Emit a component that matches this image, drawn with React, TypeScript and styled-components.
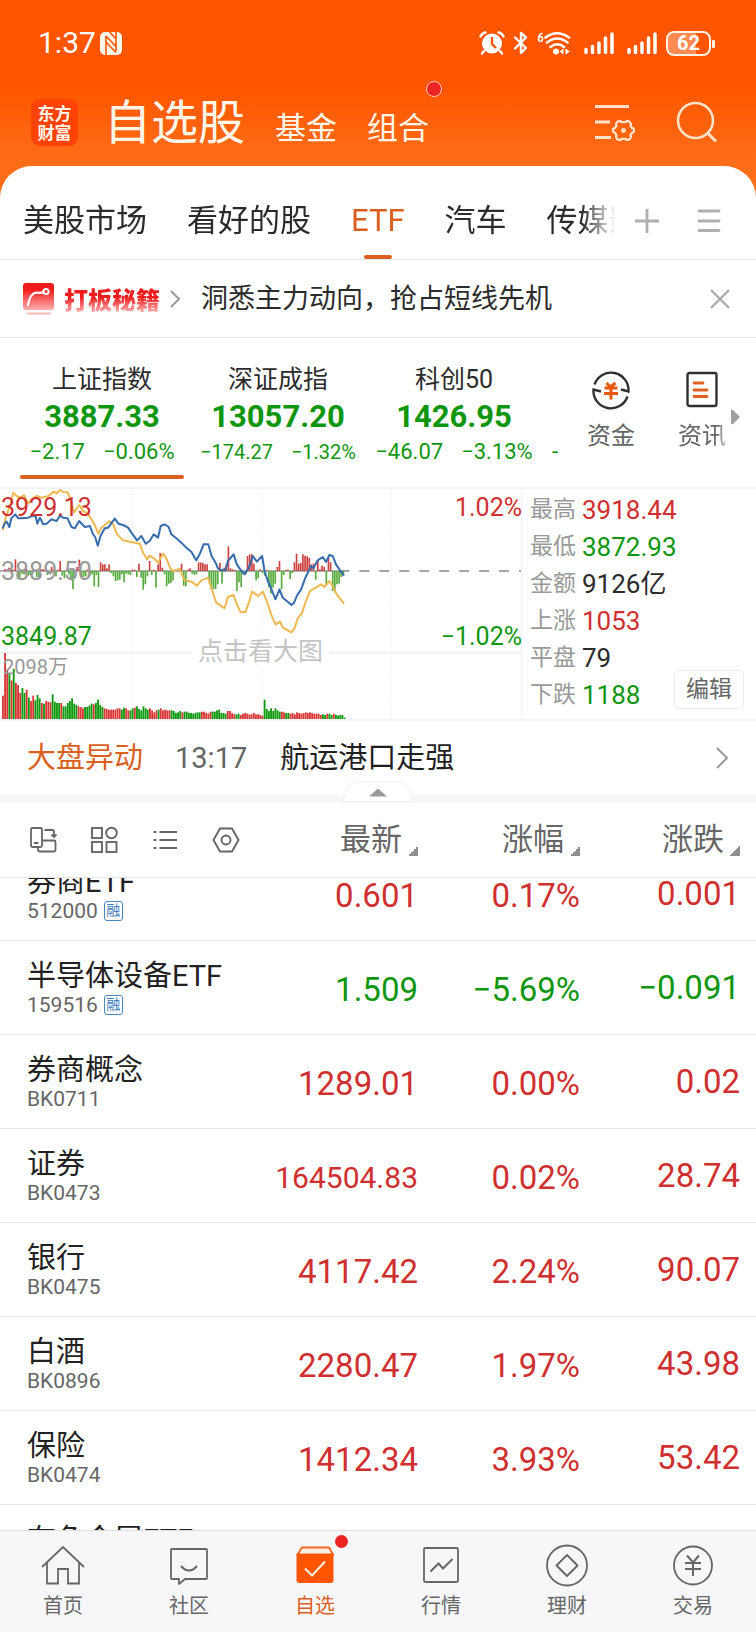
import React, { useLayoutEffect, useRef } from "react";
import styled, { createGlobalStyle, css } from "styled-components";

const RED = "#cf2f2f";
const GREEN = "#0f960f";
const ORANGE = "#ff5500";
const ACCENT = "#dc5f22";
const INK = "#2b2b2b";
const GREY = "#666666";
const LINE = "#e6e6e6";

type Tone = "up" | "down" | "plain";
const toneColor = (t: Tone) => (t === "up" ? RED : t === "down" ? GREEN : INK);

const GlobalStyle = createGlobalStyle`
  *, *::before, *::after { box-sizing: border-box; }
  body {
    margin: 0;
    font-family: Roboto, "Noto Sans CJK SC", sans-serif;
    color: ${INK};
    background: #fff;
  }
  button {
    margin: 0;
    padding: 0;
    border: 0;
    background: none;
    font: inherit;
    color: inherit;
    cursor: pointer;
  }
  svg { display: block; flex: none; }
  dl, dt, dd, p, h1, h2 { margin: 0; font-weight: 400; }
`;

const Screen = styled.div`
  display: flex;
  flex-direction: column;
  height: 100vh;
  background: linear-gradient(${ORANGE} 86px, #ff6d18 160px);
`;

/* ---------- status bar ---------- */

const StatusBar = styled.div`
  display: flex;
  align-items: center;
  justify-content: space-between;
  height: 86px;
  padding: 0 40px 0 38px;
  color: #fff;
`;

const StatusGroup = styled.div<{ $gap: number }>`
  display: flex;
  align-items: center;
  gap: ${(p) => p.$gap}px;
`;

const Clock = styled.span`
  font-size: 30px;
  line-height: 36px;
`;

const Battery = styled.div`
  position: relative;
  width: 45px;
  height: 25px;
  margin: 0 5px 0 -4px;
  border: 2px solid #fff2e6;
  border-radius: 8px;
  background: linear-gradient(90deg, #ff8a52 68%, transparent 68%);
  font-size: 20px;
  font-weight: 700;
  line-height: 21px;
  text-align: center;
  &::after {
    content: "";
    position: absolute;
    top: 7px;
    right: -6px;
    width: 3px;
    height: 8px;
    border-radius: 1px;
    background: #fff2e6;
  }
`;

/* ---------- app header ---------- */

const Header = styled.header`
  display: flex;
  align-items: center;
  height: 80px;
  padding: 0 38px 8px 31px;
  color: #fff6ea;
`;

const Logo = styled.div`
  display: flex;
  align-items: center;
  justify-content: center;
  width: 47px;
  height: 47px;
  margin-right: 26px;
  border-radius: 9px;
  background: #ff4306;
  font-family: "Noto Sans CJK SC", sans-serif;
  font-size: 17px;
  font-weight: 700;
  line-height: 19px;
  text-align: center;
`;

const Sections = styled.nav`
  display: flex;
  align-items: baseline;
  flex: 1;
  gap: 30px;
  padding-top: 8px;
`;

const SectionButton = styled.button<{ $active?: boolean }>`
  position: relative;
  font-size: ${(p) => (p.$active ? 47 : 31)}px;
  line-height: 60px;
`;

const Dot = styled.i<{ $ring?: boolean }>`
  position: absolute;
  top: ${(p) => (p.$ring ? -18 : 4)}px;
  right: ${(p) => (p.$ring ? -13 : 30)}px;
  width: ${(p) => (p.$ring ? 16 : 13)}px;
  height: ${(p) => (p.$ring ? 16 : 13)}px;
  border: ${(p) => (p.$ring ? "1px solid #ffc9b8" : "0")};
  border-radius: 50%;
  background: #ee2424;
`;

const HeaderActions = styled.div`
  display: flex;
  align-items: center;
  gap: 41px;
`;

/* ---------- white sheet ---------- */

const Sheet = styled.main`
  display: flex;
  flex: 1;
  flex-direction: column;
  min-height: 0;
  border-radius: 32px 32px 0 0;
  background: #fff;
`;

const TabRow = styled.div`
  display: flex;
  align-items: stretch;
  height: 94px;
  padding-right: 35px;
  border-bottom: 1px solid ${LINE};
  color: #b0b0b0;
`;

const Tabs = styled.nav`
  display: flex;
  flex: 1;
  gap: 40px;
  min-width: 0;
  padding-left: 23px;
  margin-right: 19px;
  overflow: hidden;
  color: ${INK};
  mask-image: linear-gradient(90deg, #000 calc(100% - 34px), transparent);
`;

const Tab = styled.button<{ $active?: boolean }>`
  position: relative;
  flex: none;
  padding-top: 16px;
  font-size: 31px;
  line-height: 40px;
  white-space: nowrap;
  color: ${(p) => (p.$active ? ACCENT : INK)};
  ${(p) =>
    p.$active &&
    css`
      &::after {
        content: "";
        position: absolute;
        bottom: 0;
        left: calc(50% - 14px);
        width: 28px;
        height: 4px;
        border-radius: 2px;
        background: ${ACCENT};
      }
    `}
`;

const TabActions = styled.div`
  display: flex;
  align-items: center;
  gap: 38px;
  padding-top: 16px;
`;

const Promo = styled.section`
  display: flex;
  align-items: center;
  height: 78px;
  padding: 0 26px 0 23px;
  border-bottom: 1px solid ${LINE};
`;

const PromoLink = styled.a`
  display: flex;
  align-items: center;
  text-decoration: none;
`;

const PromoTitle = styled.strong`
  margin: 0 10px;
  font-family: "Noto Sans CJK SC", sans-serif;
  font-size: 24px;
  font-weight: 900;
  line-height: 36px;
  color: transparent;
  background: linear-gradient(#ee1c1c 45%, #ffb4b4 88%);
  background-clip: text;
  -webkit-background-clip: text;
`;

const PromoText = styled.p`
  flex: 1;
  margin-left: 20px;
  font-size: 27px;
  line-height: 40px;
  white-space: nowrap;
`;

/* ---------- indices ---------- */

const Indices = styled.section`
  display: flex;
  height: 149px;
`;

const IndexStrip = styled.div`
  display: flex;
  flex: 1;
  min-width: 0;
  padding-left: 14px;
  overflow: hidden;
`;

const IndexCard = styled.button<{ $active?: boolean }>`
  display: flex;
  flex: none;
  flex-direction: column;
  align-items: center;
  gap: 2px;
  width: 176px;
  padding-top: 26px;
  color: ${GREEN};
  ${(p) =>
    p.$active &&
    css`
      &::after {
        content: "";
        width: 164px;
        height: 4px;
        margin-top: 7px;
        border-radius: 2px;
        background: ${ACCENT};
      }
    `}
`;

const IndexName = styled.span`
  font-size: 25px;
  line-height: 32px;
  color: ${INK};
`;

const IndexValue = styled.span`
  font-size: 31px;
  font-weight: 700;
  line-height: 38px;
`;

const IndexChange = styled.span<{ $small?: boolean }>`
  display: flex;
  gap: 18px;
  font-size: ${(p) => (p.$small ? 20 : 22)}px;
  line-height: 28px;
`;

const NextCard = styled.span`
  flex: none;
  padding: 100px 0 0 10px;
  font-size: 22px;
  line-height: 28px;
  color: ${GREEN};
`;

const Tools = styled.div`
  display: flex;
  align-items: flex-start;
  padding: 32px 16px 0 27px;
`;

const Tool = styled.button<{ $fade?: boolean }>`
  display: flex;
  flex-direction: column;
  align-items: center;
  gap: 8px;
  margin-right: ${(p) => (p.$fade ? 5 : 43)}px;
  font-size: 24px;
  line-height: 36px;
  color: ${GREY};
  mask-image: ${(p) =>
    p.$fade ? "linear-gradient(90deg, #000 80%, rgba(0,0,0,0.4))" : "none"};
`;

const MoreTools = styled.button`
  margin-top: 39px;
`;

/* ---------- chart ---------- */

const Market = styled.section`
  display: flex;
  height: 234px;
  border: solid #f2f2f4;
  border-width: 2px 0;
`;

const Chart = styled.figure`
  position: relative;
  flex: 1;
  min-width: 0;
  margin: 0;
  border-right: 1px solid #f0f0f2;
`;

const ChartSvg = styled.svg`
  width: 100%;
  height: 100%;
`;

const ChartLabel = styled.span<{ $top: number; $right?: boolean; $color: string }>`
  position: absolute;
  top: ${(p) => p.$top}px;
  ${(p) => (p.$right ? "right: -1px;" : "left: 1px;")}
  font-size: 25px;
  line-height: 30px;
  color: ${(p) => p.$color};
`;

const VolumeLabel = styled.span`
  position: absolute;
  top: 164px;
  left: 3px;
  font-size: 20px;
  line-height: 28px;
  color: #999;
`;

const Enlarge = styled.button`
  position: absolute;
  top: 145px;
  left: 50%;
  padding: 0 6px;
  transform: translateX(-50%);
  background: #fff;
  font-size: 25px;
  line-height: 36px;
  color: #c4c4c4;
  white-space: nowrap;
`;

const Stats = styled.aside`
  display: flex;
  align-items: flex-end;
  justify-content: space-between;
  width: 234px;
  padding: 0 12px 0 8px;
`;

const StatList = styled.dl`
  display: grid;
  grid-template-columns: auto auto;
  grid-auto-rows: 37px;
  column-gap: 6px;
  align-items: center;
  justify-content: start;
  width: 0;
  height: 100%;
  padding-top: 2px;
  white-space: nowrap;
`;

const StatName = styled.dt`
  font-size: 23px;
  line-height: 34px;
  color: #999;
`;

const StatValue = styled.dd<{ $tone: Tone }>`
  font-size: 26px;
  line-height: 34px;
  color: ${(p) => toneColor(p.$tone)};
`;

const EditButton = styled.button`
  width: 70px;
  height: 39px;
  margin-bottom: 10px;
  border: 1px solid #ececec;
  border-radius: 4px;
  background: #fff;
  font-size: 23px;
  line-height: 37px;
  color: ${GREY};
`;

/* ---------- news ---------- */

const News = styled.section`
  position: relative;
  display: flex;
  align-items: center;
  height: 82px;
  padding: 0 27px;
  border-bottom: 8px solid #f6f7f9;
  font-size: 29px;
  line-height: 40px;
`;

const NewsTag = styled.h2`
  font-size: 29px;
  color: #d9601d;
`;

const NewsTime = styled.time`
  margin: 0 33px 0 32px;
  color: ${GREY};
`;

const NewsText = styled.a`
  flex: 1;
  color: #1f1f1f;
  text-decoration: none;
`;

const Handle = styled.button`
  position: absolute;
  bottom: -8px;
  left: calc(50% - 36px);
`;

/* ---------- quotes ---------- */

const Scroller = styled.div`
  flex: 1;
  min-height: 0;
  overflow-y: auto;
  scrollbar-width: none;
`;

const Quotes = styled.table`
  width: 100%;
  table-layout: fixed;
  border-collapse: separate;
  border-spacing: 0;
`;

const HeadCell = styled.th<{ $wide?: boolean }>`
  position: sticky;
  top: 0;
  z-index: 1;
  width: ${(p) => (p.$wide ? "auto" : "162px")};
  height: 75px;
  padding: 0;
  border-bottom: 1px solid ${LINE};
  background: #fff;
  font-weight: 400;
  color: ${GREY};
  &:last-child {
    width: 176px;
    padding-right: 16px;
  }
`;

const ViewButtons = styled.div`
  display: flex;
  gap: 33px;
  padding-left: 29px;
`;

const SortButton = styled.button`
  display: flex;
  align-items: center;
  gap: 6px;
  margin-left: auto;
  font-size: 31px;
  line-height: 44px;
  &::after {
    content: "";
    width: 10px;
    height: 10px;
    margin-top: 22px;
    background: linear-gradient(135deg, transparent 50%, #8e8e93 50%);
  }
`;

const Cell = styled.td<{ $tone?: Tone; $long?: boolean }>`
  height: 94px;
  padding: 4px 0 0;
  border-bottom: 1px solid ${LINE};
  text-align: right;
  font-size: ${(p) => (p.$long ? 30 : 33)}px;
  line-height: 40px;
  color: ${(p) => toneColor(p.$tone ?? "plain")};
  &:last-child {
    padding: 0 16px 0 0;
  }
`;

const NameCell = styled.th`
  padding: 0 0 0 27px;
  border-bottom: 1px solid ${LINE};
  text-align: left;
  font-weight: 400;
  white-space: nowrap;
`;

const StockName = styled.div`
  font-size: 29px;
  line-height: 34px;
  color: #222;
`;

const StockCode = styled.div`
  display: flex;
  align-items: center;
  gap: 6px;
  min-height: 24px;
  font-size: 21px;
  line-height: 24px;
  color: ${GREY};
`;

const MarginBadge = styled.span`
  width: 19px;
  height: 20px;
  border: 1px solid #4a86c2;
  border-radius: 3px;
  font-size: 14px;
  line-height: 17px;
  text-align: center;
  color: #3c7cbd;
`;

/* ---------- bottom bar ---------- */

const BottomBar = styled.nav`
  display: flex;
  height: 102px;
  border-top: 1px solid #dedede;
  background: #f7f7fa;
`;

const BottomItem = styled.button<{ $active?: boolean }>`
  position: relative;
  display: flex;
  flex: 1;
  flex-direction: column;
  align-items: center;
  gap: 4px;
  padding-top: 12px;
  font-size: 20px;
  line-height: 30px;
  color: ${(p) => (p.$active ? ACCENT : GREY)};
`;

/* ---------- icons ---------- */

const NfcIcon = () => (
  <svg width="22" height="23" viewBox="0 0 22 23" fill="none" stroke={ORANGE} strokeWidth="1.600">
    <rect width="22" height="23" rx="5" fill="#fff6ea" stroke="none" />
    <path d="M6 4v19M16 0v19M6 4l10 10.500M6 10l10 10.500M9.500 0L16 7" />
  </svg>
);

const AlarmIcon = () => (
  <svg width="26" height="24" viewBox="0 0 26 24" fill="none" stroke="#fff">
    <circle cx="13" cy="12.500" r="10" fill="#fff" stroke="none" />
    <path d="M1.500 5.500Q3 2 6.500 1.500M24.500 5.500Q23 2 19.500 1.500M5 20l-2 2.500M21 20l2 2.500" strokeWidth="2.400" strokeLinecap="round" />
    <path d="M13 6v7l4 4" stroke={ORANGE} strokeWidth="2.400" />
  </svg>
);

const BluetoothIcon = () => (
  <svg width="16" height="24" viewBox="0 0 16 24" fill="none" stroke="#fff" strokeWidth="2.400">
    <path d="M2 6.500l11 10.500-5 5V2l5 4.500L2 17.500" strokeLinejoin="round" strokeLinecap="round" />
  </svg>
);

const WifiIcon = () => (
  <svg width="34" height="25" viewBox="0 0 34 25" fill="none" stroke="#fff" strokeWidth="2.600">
    <path d="M5.500 2.200Q1.500 3 1.500 7.500q0 3 2 3t2-2.500q0-2.500-2-2.500-1.500 0-2 2" strokeWidth="1.600" />
    <path d="M8.500 6.500Q20 -2 32 6.500M10 11.500q10-8 20.500 0M13.500 16q7-5.500 13.500 0" strokeLinecap="round" />
    <circle cx="19" cy="20.500" r="3" fill="#fff" stroke="none" />
    <path d="M22.500 20.500l4-3v6zM28.500 17.500v6l4.500-3z" fill="#fff" stroke="none" />
  </svg>
);

const SignalIcon = () => (
  <svg width="30" height="24" viewBox="0 0 30 24" stroke="#fff" strokeWidth="3.500" strokeLinecap="round">
    <path d="M2 18.500v3M8.500 15.500v6M15 12v9.500M21.500 7v14.500M28 3v18.500" />
  </svg>
);

const ListSettingsIcon = () => (
  <svg width="41" height="37" viewBox="0 0 41 37" fill="none" stroke="#ffe2c8" strokeWidth="2.800">
    <path d="M1 2.500h34M1 18h15M1 33.500h16" />
    <path
      d="M25.500 17q1.500 0 2 1.200h4q.5-1.200 2-1.200 2 0 3 2 .8 1.500 0 2.800l1.500 2.200q2.500.5 2 2.500 0 2-2 2.300l-1.500 2.400q.8 1.500 0 2.800-1 2-3 2-1.500 0-2-1.200h-4q-.5 1.200-2 1.200-2 0-3-2-.8-1.300 0-2.800L21 28.800q-2-.3-2-2.300-.5-2 2-2.500l1.500-2.200q-.8-1.300 0-2.800 1-2 3-2z"
      strokeWidth="2.300"
      strokeLinejoin="round"
    />
    <circle cx="29.500" cy="26.500" r="2.400" fill="#ffe2c8" stroke="none" />
  </svg>
);

const SearchIcon = () => (
  <svg width="42" height="42" viewBox="0 0 42 42" fill="none" stroke="#ffe2c8" strokeWidth="2.600">
    <circle cx="19.500" cy="19.500" r="17.500" />
    <path d="M31.500 32l8.500 8.500" strokeWidth="3" />
  </svg>
);

const PlusIcon = () => (
  <svg width="24" height="24" viewBox="0 0 24 24" stroke="#b0b0b0" strokeWidth="2.800">
    <path d="M12 0v24M0 12h24" />
  </svg>
);

const MenuIcon = () => (
  <svg width="24" height="24" viewBox="0 0 24 24" stroke="#b0b0b0" strokeWidth="2.800" strokeLinecap="round">
    <path d="M2 2h20M2 12h20M2 21.500h20" />
  </svg>
);

const PromoIcon = () => (
  <svg width="31" height="32" viewBox="0 0 31 32" fill="none">
    <defs>
      <linearGradient id="promo" x1="0" y1="0" x2="0" y2="1">
        <stop offset="0.250" stopColor="#f01c1c" />
        <stop offset="1" stopColor="#ffb0b0" />
      </linearGradient>
    </defs>
    <rect width="31" height="27" rx="3" fill="url(#promo)" />
    <path d="M5 22Q7 10 13.500 9.500q4 1 7-.5" stroke="#fff" strokeWidth="2.200" strokeLinecap="round" />
    <circle cx="23" cy="8.500" r="2.600" stroke="#fff" strokeWidth="2" />
    <path d="M5 30.500h22" stroke="#ffb8b8" strokeWidth="2" strokeLinecap="round" />
  </svg>
);

const ChevronIcon = ({ width, height, weight }: { width: number; height: number; weight: number }) => (
  <svg width={width} height={height} viewBox={`0 0 ${width} ${height}`} fill="none" stroke="#999" strokeWidth={weight}>
    <path d={`M1 1L${width - 2} ${height / 2}L1 ${height - 1}`} />
  </svg>
);

const CloseIcon = () => (
  <svg width="20" height="20" viewBox="0 0 20 20" stroke="#aaa" strokeWidth="2.400">
    <path d="M1 1l18 18M19 1L1 19" />
  </svg>
);

const FundsIcon = () => (
  <svg width="40" height="40" viewBox="0 0 40 40" fill="none" stroke="#303030" strokeWidth="2.400">
    <path d="M3.500 14.500A17.500 17.500 0 0 1 37.500 21.500L30 19.500" />
    <path d="M36.500 26.500A17.500 17.500 0 0 1 2.500 19.500L10 21.500" />
    <path d="M15.500 13l4 4 5-4M13.500 18h13M13 23.500h14M20 18v11.500" stroke="#e9570f" strokeWidth="3" />
  </svg>
);

const InfoIcon = () => (
  <svg width="32" height="40" viewBox="0 0 32 40" fill="none" stroke="#303030" strokeWidth="2.400">
    <rect x="1.500" y="3" width="29" height="33" rx="2" />
    <path d="M8 13h9M8 20h13M8 26.500h13" stroke="#e0601f" strokeWidth="2.800" strokeLinecap="round" />
  </svg>
);

const MoreIcon = () => (
  <svg width="9" height="16" viewBox="0 0 9 16">
    <path d="M0 1q2-1 3 1l6 6-6 6q-1 2-3 1z" fill="#a0a0a0" />
  </svg>
);

const HandleIcon = () => (
  <svg width="72" height="22" viewBox="0 0 72 22">
    <path d="M1 20.500Q4 2 14 1h44q10 1 13 19.500z" fill="#fff" stroke="#eeeff1" />
    <path d="M27 15.500L36 7.500l9 8z" fill="#999" />
  </svg>
);

const RotateIcon = () => (
  <svg width="28" height="28" viewBox="0 0 28 28" fill="none" stroke={GREY} strokeWidth="1.800">
    <rect x="2" y="2" width="11" height="19" rx="1.500" />
    <path d="M5 17h4.500M15.500 4h8q1.500 0 1.500 1.500V10M22.500 8.500l2.500 2.500 2.500-2.500M9 21v2.500q0 2 2 2h14q1.500 0 1.500-1.500v-8q0-1.500-1.500-1.500H13" />
  </svg>
);

const GridIcon = () => (
  <svg width="28" height="28" viewBox="0 0 28 28" fill="none" stroke={GREY} strokeWidth="1.900">
    <rect x="2" y="2" width="10" height="10" />
    <circle cx="21.500" cy="7" r="5.300" />
    <rect x="2" y="16" width="10" height="10" />
    <rect x="16.500" y="16" width="10" height="10" />
  </svg>
);

const RowsIcon = () => (
  <svg width="28" height="28" viewBox="0 0 28 28" stroke={GREY} strokeWidth="2.200">
    <path d="M8.500 6H26M8.500 14H26M8.500 22H26M2.500 6h3M2.500 14h3M2.500 22h3" />
  </svg>
);

const HexIcon = () => (
  <svg width="28" height="28" viewBox="0 0 28 28" fill="none" stroke={GREY} strokeWidth="1.900">
    <path d="M8 2.500h12L26.500 14 20 25.500H8L1.500 14z" strokeLinejoin="round" />
    <circle cx="14" cy="14" r="4.500" />
  </svg>
);

const HomeIcon = () => (
  <>
    <path d="M1 24L22 4l21 20" />
    <path d="M6 20v20.500h11V26h10v14.500h11V20" />
  </>
);

const ChatIcon = () => (
  <>
    <path d="M5 6h34q1 0 1 1v28q0 1-1 1H18l-6 5v-5H5q-1 0-1-1V7q0-1 1-1z" strokeLinejoin="round" />
    <path d="M14 23q8 9 16 0" strokeWidth="2" />
  </>
);

const PickedIcon = () => (
  <>
    <path d="M9 4.500h27l4 7H4.500z" stroke="#f0661f" fill="#fff0e2" />
    <path d="M3.500 12q0-2 2-2l2 1h29l2-1q2 0 2 2v25q0 3-3 3h-31q-3 0-3-3z" fill={ORANGE} stroke="none" />
    <path d="M12 25.500l7 7 13-14" stroke="#fff0e2" strokeWidth="2" />
  </>
);

const QuotesIcon = () => (
  <>
    <rect x="5" y="5" width="34" height="34" rx="1.500" />
    <path d="M11.500 28.500l8-8 4.500 5 9.500-9.500" strokeWidth="2" />
  </>
);

const WealthIcon = () => (
  <>
    <circle cx="22" cy="22.500" r="20" />
    <path d="M22 12l10.500 10.500L22 33 11.500 22.500z" strokeLinejoin="round" />
  </>
);

const TradeIcon = () => (
  <>
    <circle cx="22" cy="22.500" r="19" />
    <path d="M16 12.500l6 7 6-7M14 20h16M14 26h16M22 20v13" strokeWidth="2" />
  </>
);

/* ---------- data ---------- */

const bottomItems = [
  { label: "首页", Icon: HomeIcon },
  { label: "社区", Icon: ChatIcon },
  { label: "自选", Icon: PickedIcon, active: true },
  { label: "行情", Icon: QuotesIcon },
  { label: "理财", Icon: WealthIcon },
  { label: "交易", Icon: TradeIcon },
];

const tabs = ["美股市场", "看好的股", "ETF", "汽车", "传媒影视"];

const indices = [
  { name: "上证指数", value: "3887.33", change: "−2.17", pct: "−0.06%" },
  { name: "深证成指", value: "13057.20", change: "−174.27", pct: "−1.32%", small: true },
  { name: "科创50", value: "1426.95", change: "−46.07", pct: "−3.13%" },
];

const stats: { name: string; value: string; tone: Tone }[] = [
  { name: "最高", value: "3918.44", tone: "up" },
  { name: "最低", value: "3872.93", tone: "down" },
  { name: "金额", value: "9126亿", tone: "plain" },
  { name: "上涨", value: "1053", tone: "up" },
  { name: "平盘", value: "79", tone: "plain" },
  { name: "下跌", value: "1188", tone: "down" },
];

type Quote = {
  name: string;
  code: string;
  margin?: boolean;
  last: string;
  pct: string;
  diff: string;
  tone: Tone;
};

const quotes: Quote[] = [
  { name: "券商ETF", code: "512000", margin: true, last: "0.601", pct: "0.17%", diff: "0.001", tone: "up" },
  { name: "半导体设备ETF", code: "159516", margin: true, last: "1.509", pct: "−5.69%", diff: "−0.091", tone: "down" },
  { name: "券商概念", code: "BK0711", last: "1289.01", pct: "0.00%", diff: "0.02", tone: "up" },
  { name: "证券", code: "BK0473", last: "164504.83", pct: "0.02%", diff: "28.74", tone: "up" },
  { name: "银行", code: "BK0475", last: "4117.42", pct: "2.24%", diff: "90.07", tone: "up" },
  { name: "白酒", code: "BK0896", last: "2280.47", pct: "1.97%", diff: "43.98", tone: "up" },
  { name: "保险", code: "BK0474", last: "1412.34", pct: "3.93%", diff: "53.42", tone: "up" },
  { name: "有色金属ETF", code: "", last: "", pct: "", diff: "", tone: "up" },
];

const priceLine =
  "8,142 14,128 20,122 28,138 34,112 46,100 55,112 62,112 85,110 100,104 108,108 112,128 120,110 130,130 140,128 155,115 170,120 180,104 190,110 203,112 215,138 225,142 238,120 255,138 270,135 280,160 286,168 294,194 302,165 315,142 325,140 345,113 356,128 370,132 385,140 395,155 412,178 425,165 438,188 450,180 462,160 475,170 483,135 495,130 507,138 515,160 530,172 545,185 560,200 575,212 590,238 600,220 612,190 626,190 636,225 648,245 655,262 668,268 678,268 685,240 702,220 712,250 722,265 735,280 748,260 760,225 772,242 788,225 795,270 805,300 818,330 828,355 840,325 850,350 862,360 876,372 884,365 892,345 905,325 918,290 935,255 942,262 955,238 970,228 980,243 990,222 1000,225 1010,250 1022,268 1034,284";

const averageLine =
  "8,148 20,100 30,75 40,35 50,45 60,50 72,42 85,68 95,55 110,45 125,50 145,45 162,32 170,38 180,27 190,33 203,34 212,55 222,95 238,72 250,90 265,100 275,115 283,128 296,158 305,140 330,120 340,130 352,160 370,178 390,182 405,185 420,188 430,215 442,235 450,224 463,232 475,245 490,218 500,232 512,262 520,270 540,264 555,298 575,302 592,314 605,298 625,290 635,320 650,365 675,382 685,348 702,342 712,370 722,392 737,394 748,365 758,332 775,345 790,332 802,360 815,400 828,430 842,422 850,440 865,448 876,454 886,440 895,412 908,395 918,365 932,330 945,322 965,310 975,318 990,300 1000,315 1012,340 1034,368";

/* one value per minute: positive bars are drawn above the mid line */
const momentum = [
  5, 5, 10, 8, 4, 35, -25, -25, -8, -10, 6, -14, -12, -8, 4, -18, -20, 5, 5, 4, -12, -10, 12, 6, -16, 4, 30, -14, -22, 4,
  -10, -28, -54, -20, 12, 34, -18, -18, -16, 5, -14, -10, -46, -12, -48, 26, 20, 20, 8, 20, -6, -16, -30, -28, -26, -10, -34,
  -8, -10, -12, 4, 3, -18, 22, -20, -56, -40, -16, 30, -12, 4, -50, 20, 54, 10, -10, -46, -38, -36, -28, 4, 5, 8, 22, -44,
  -46, 4, 8, -8, -12, -10, 26, 26, 24, 20, 20, -28, -54, -54, -54, -40, 24, -38, 10, 20, 74, 8, 5, 3, -60, -34, -48, -8,
  -10, 45, 50, 50, 22, -28, -22, 5, -6, -14, 3, -48, -68, -50, -38, 12, 30, -54, -12, 3, 4, -24, -6, 26, 52, 22, 24, 50, 46,
  44, 40, 20, 22, -26, 32, 5, 16, 12, -40, 40, 26, -60, -64, -40, -38, -18, -14,
];

const volume = [
  72, 200, 150, 138, 118, 152, 110, 104, 80, 95, 80, 90, 66, 56, 72, 58, 74, 64, 50, 48, 56, 54, 52, 76, 54, 50, 50, 50, 40,
  40, 50, 56, 64, 48, 44, 40, 38, 34, 38, 38, 42, 48, 46, 50, 60, 44, 38, 34, 32, 30, 30, 30, 30, 34, 34, 30, 36, 34, 28, 28,
  34, 36, 40, 32, 28, 40, 34, 30, 34, 28, 22, 28, 30, 34, 28, 30, 28, 28, 28, 26, 20, 22, 26, 22, 24, 24, 20, 20, 18, 20, 22,
  22, 24, 24, 20, 18, 24, 24, 24, 28, 30, 20, 20, 18, 26, 26, 20, 16, 16, 18, 14, 18, 20, 18, 16, 16, 20, 16, 16, 14, 12, 60,
  32, 26, 34, 26, 34, 28, 24, 24, 22, 20, 20, 18, 20, 16, 22, 20, 18, 20, 22, 20, 22, 20, 18, 18, 18, 14, 16, 14, 18, 18, 14,
  18, 14, 12, 14, 14, 6,
];
const volumeRuns =
  "rrrgrgrrrggrgrrgggrgrrrggggrgggggggrrrggggrggggrrrrrrrrggrrggrggggggrrrrgrrrrrgggggrggggggggrrrrrgggggggrrrrggrrrrrrrrrrrggggggggrrggrrrrrrrrrrrrrrrggrggrggggg";

function PriceChart() {
  return (
    <ChartSvg viewBox="0 24 1566 690" preserveAspectRatio="none" aria-label="上证指数分时图">
      <g stroke="#dcdce0" strokeWidth="2" strokeDasharray="3 6">
        <path d="M398 21v700M787 21v700M1176 21v700" />
      </g>
      <path d="M0 515h1566" stroke="#ededf0" strokeWidth="5" />
      <path d="M0 270h1034" stroke="#999" strokeWidth="4" />
      <path d="M1020 270h546" stroke="#888" strokeWidth="5" strokeDasharray="30 30" />
      {momentum.map((v, i) => (
        <rect
          key={i}
          x={12 + i * 6.4}
          y={v > 0 ? 270 - v : 270}
          width="5"
          height={Math.abs(v)}
          fill={v > 0 ? "#cc4040" : "#55ab3c"}
        />
      ))}
      {volume.map((v, i) => (
        <rect
          key={i}
          x={6 + i * 6.5}
          y={716 - v}
          width="5.500"
          height={v}
          fill={volumeRuns[i] === "r" ? "#d93636" : "#0c980c"}
        />
      ))}
      <g fill="none" strokeWidth="6" strokeLinejoin="round">
        <polyline points={averageLine} stroke="#efb850" />
        <polyline points={priceLine} stroke="#366cac" />
      </g>
    </ChartSvg>
  );
}

export default function App() {
  const scroller = useRef<HTMLDivElement>(null);

  // The list opens part-way through its first row.
  useLayoutEffect(() => {
    if (scroller.current) scroller.current.scrollTop = 31;
  }, []);

  return (
    <Screen>
      <GlobalStyle />
      <StatusBar>
        <StatusGroup $gap={4}>
          <Clock>1:37</Clock>
          <NfcIcon />
        </StatusGroup>
        <StatusGroup $gap={13}>
          <StatusGroup $gap={8}>
            <AlarmIcon />
            <BluetoothIcon />
            <WifiIcon />
          </StatusGroup>
          <SignalIcon />
          <SignalIcon />
          <Battery>62</Battery>
        </StatusGroup>
      </StatusBar>

      <Header>
        <Logo>
          东方
          <br />
          财富
        </Logo>
        <Sections>
          <SectionButton $active>自选股</SectionButton>
          <SectionButton>基金</SectionButton>
          <SectionButton>
            组合
            <Dot $ring />
          </SectionButton>
        </Sections>
        <HeaderActions>
          <button aria-label="设置">
            <ListSettingsIcon />
          </button>
          <button aria-label="搜索">
            <SearchIcon />
          </button>
        </HeaderActions>
      </Header>

      <Sheet>
        <TabRow>
          <Tabs>
            {tabs.map((t) => (
              <Tab key={t} $active={t === "ETF"}>
                {t}
              </Tab>
            ))}
          </Tabs>
          <TabActions>
            <button aria-label="添加分组">
              <PlusIcon />
            </button>
            <button aria-label="全部分组">
              <MenuIcon />
            </button>
          </TabActions>
        </TabRow>

        <Promo>
          <PromoLink href="#promo">
            <PromoIcon />
            <PromoTitle>打板秘籍</PromoTitle>
            <ChevronIcon width={11} height={18} weight={2} />
          </PromoLink>
          <PromoText>洞悉主力动向，抢占短线先机</PromoText>
          <button aria-label="关闭">
            <CloseIcon />
          </button>
        </Promo>

        <Indices>
          <IndexStrip>
            {indices.map((x, i) => (
              <IndexCard key={x.name} $active={i === 0}>
                <IndexName>{x.name}</IndexName>
                <IndexValue>{x.value}</IndexValue>
                <IndexChange $small={x.small}>
                  <span>{x.change}</span>
                  <span>{x.pct}</span>
                </IndexChange>
              </IndexCard>
            ))}
            <NextCard>-</NextCard>
          </IndexStrip>
          <Tools>
            <Tool>
              <FundsIcon />
              资金
            </Tool>
            <Tool $fade>
              <InfoIcon />
              资讯
            </Tool>
            <MoreTools aria-label="更多">
              <MoreIcon />
            </MoreTools>
          </Tools>
        </Indices>

        <Market>
          <Chart>
            <PriceChart />
            <ChartLabel $top={4} $color={RED}>3929.13</ChartLabel>
            <ChartLabel $top={68} $color="#999">3889.50</ChartLabel>
            <ChartLabel $top={133} $color={GREEN}>3849.87</ChartLabel>
            <ChartLabel $top={4} $right $color={RED}>1.02%</ChartLabel>
            <ChartLabel $top={133} $right $color={GREEN}>−1.02%</ChartLabel>
            <VolumeLabel>2098万</VolumeLabel>
            <Enlarge>点击看大图</Enlarge>
          </Chart>
          <Stats>
            <StatList>
              {stats.map((s) => (
                <React.Fragment key={s.name}>
                  <StatName>{s.name}</StatName>
                  <StatValue $tone={s.tone}>{s.value}</StatValue>
                </React.Fragment>
              ))}
            </StatList>
            <EditButton>编辑</EditButton>
          </Stats>
        </Market>

        <News>
          <NewsTag>大盘异动</NewsTag>
          <NewsTime>13:17</NewsTime>
          <NewsText href="#news">航运港口走强</NewsText>
          <ChevronIcon width={13} height={22} weight={2} />
          <Handle aria-label="收起">
            <HandleIcon />
          </Handle>
        </News>

        <Scroller ref={scroller}>
          <Quotes>
            <thead>
              <tr>
                <HeadCell $wide>
                  <ViewButtons>
                    <button aria-label="横屏"><RotateIcon /></button>
                    <button aria-label="宫格"><GridIcon /></button>
                    <button aria-label="列表"><RowsIcon /></button>
                    <button aria-label="列表设置"><HexIcon /></button>
                  </ViewButtons>
                </HeadCell>
                {["最新", "涨幅", "涨跌"].map((h) => (
                  <HeadCell key={h} scope="col">
                    <SortButton>{h}</SortButton>
                  </HeadCell>
                ))}
              </tr>
            </thead>
            <tbody>
              {quotes.map((q) => (
                <tr key={q.name}>
                  <NameCell scope="row">
                    <StockName>{q.name}</StockName>
                    <StockCode>
                      {q.code}
                      {q.margin && <MarginBadge>融</MarginBadge>}
                    </StockCode>
                  </NameCell>
                  <Cell $tone={q.tone} $long={q.last.length > 8}>{q.last}</Cell>
                  <Cell $tone={q.tone}>{q.pct}</Cell>
                  <Cell $tone={q.tone}>{q.diff}</Cell>
                </tr>
              ))}
            </tbody>
          </Quotes>
        </Scroller>

        <BottomBar>
          {bottomItems.map(({ label, Icon, active }) => (
            <BottomItem key={label} $active={active}>
              <svg width="44" height="44" viewBox="0 0 44 44" fill="none" stroke={GREY} strokeWidth="1.800">
                <Icon />
              </svg>
              {label}
              {active && <Dot />}
            </BottomItem>
          ))}
        </BottomBar>
      </Sheet>
    </Screen>
  );
}
